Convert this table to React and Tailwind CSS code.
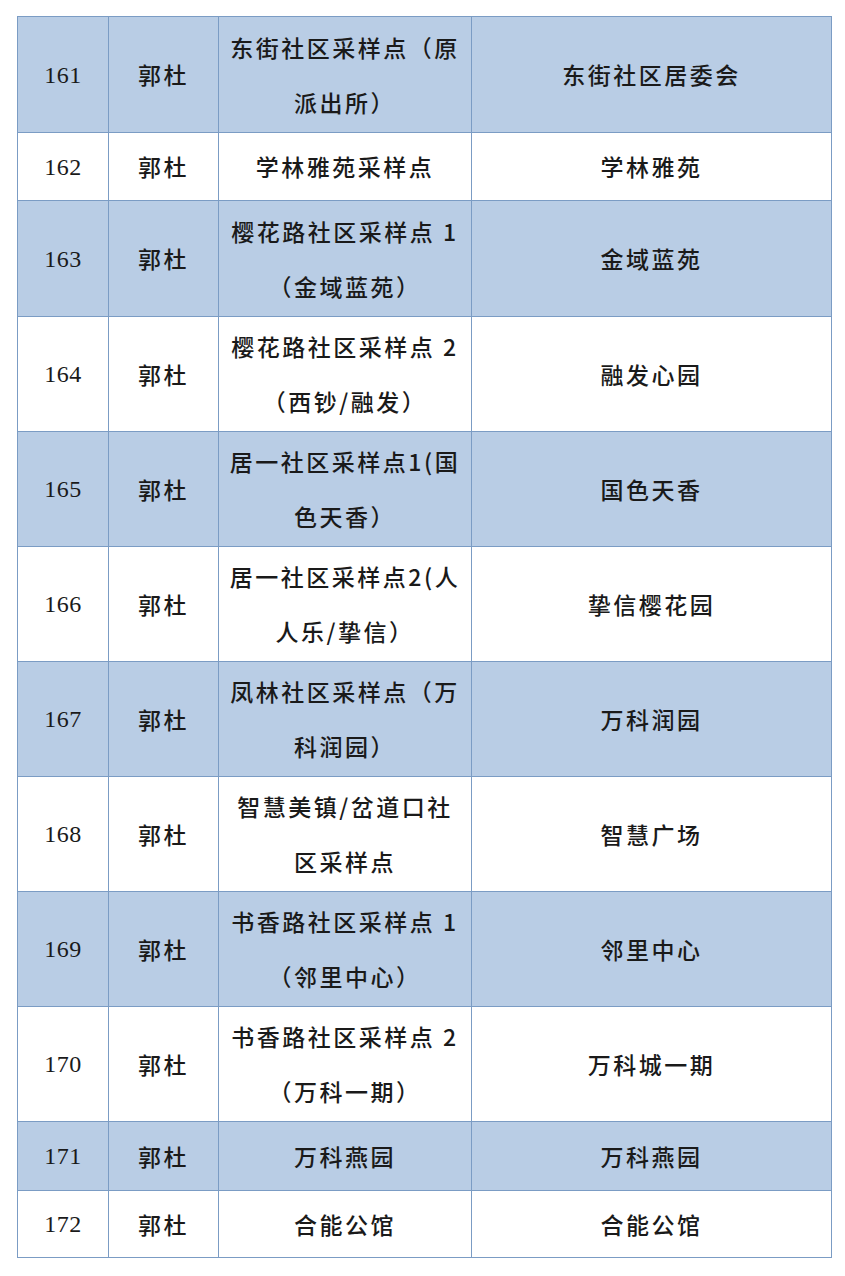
const ROWS = [
  { n: "161", site: ["东街社区采样点（原", "派出所）"], place: "东街社区居委会", h: "h-[116px]", blue: true },
  { n: "162", site: ["学林雅苑采样点"], place: "学林雅苑", h: "h-[68px]" },
  { n: "163", site: ["樱花路社区采样点 1", "（金域蓝苑）"], place: "金域蓝苑", h: "h-[116px]", blue: true },
  { n: "164", site: ["樱花路社区采样点 2", "（西钞/融发）"], place: "融发心园", h: "h-[115px]" },
  { n: "165", site: ["居一社区采样点1(国", "色天香）"], place: "国色天香", h: "h-[115px]", blue: true },
  { n: "166", site: ["居一社区采样点2(人", "人乐/挚信）"], place: "挚信樱花园", h: "h-[115px]" },
  { n: "167", site: ["凤林社区采样点（万", "科润园）"], place: "万科润园", h: "h-[115px]", blue: true },
  { n: "168", site: ["智慧美镇/岔道口社", "区采样点"], place: "智慧广场", h: "h-[115px]" },
  { n: "169", site: ["书香路社区采样点 1", "（邻里中心）"], place: "邻里中心", h: "h-[115px]", blue: true },
  { n: "170", site: ["书香路社区采样点 2", "（万科一期）"], place: "万科城一期", h: "h-[115px]" },
  { n: "171", site: ["万科燕园"], place: "万科燕园", h: "h-[69px]", blue: true },
  { n: "172", site: ["合能公馆"], place: "合能公馆", h: "h-[67px]" },
];

const cell = "border border-[#7b9cc4] text-center align-middle p-0";
const cjk = "font-['Noto_Sans_CJK_SC','Noto_Sans',sans-serif] font-medium text-[23px] tracking-[2.5px] text-[#1a1a1a]";

export default function App() {
  return (
    <div className="min-h-screen bg-white pt-[16px] pl-[17px]">
      <table className="border-collapse w-[814px] table-fixed">
        <colgroup>
          <col className="w-[91px]" />
          <col className="w-[110px]" />
          <col className="w-[253px]" />
          <col className="w-[360px]" />
        </colgroup>
        <tbody>
          {ROWS.map((r) => (
            <tr key={r.n} className={`${r.h} ${r.blue ? "bg-[#b9cde5]" : "bg-white"}`}>
              <td className={`${cell} font-['Liberation_Serif',serif] text-[24px] tracking-[0.5px] text-[#1a1a1a]`}>{r.n}</td>
              <td className={`${cell} ${cjk}`}>郭杜</td>
              <td className={`${cell} ${cjk} leading-[55px] whitespace-nowrap`}>
                {r.site.map((s, i) => (
                  <div key={i}>{s}</div>
                ))}
              </td>
              <td className={`${cell} ${cjk}`}>{r.place}</td>
            </tr>
          ))}
        </tbody>
      </table>
    </div>
  );
}
